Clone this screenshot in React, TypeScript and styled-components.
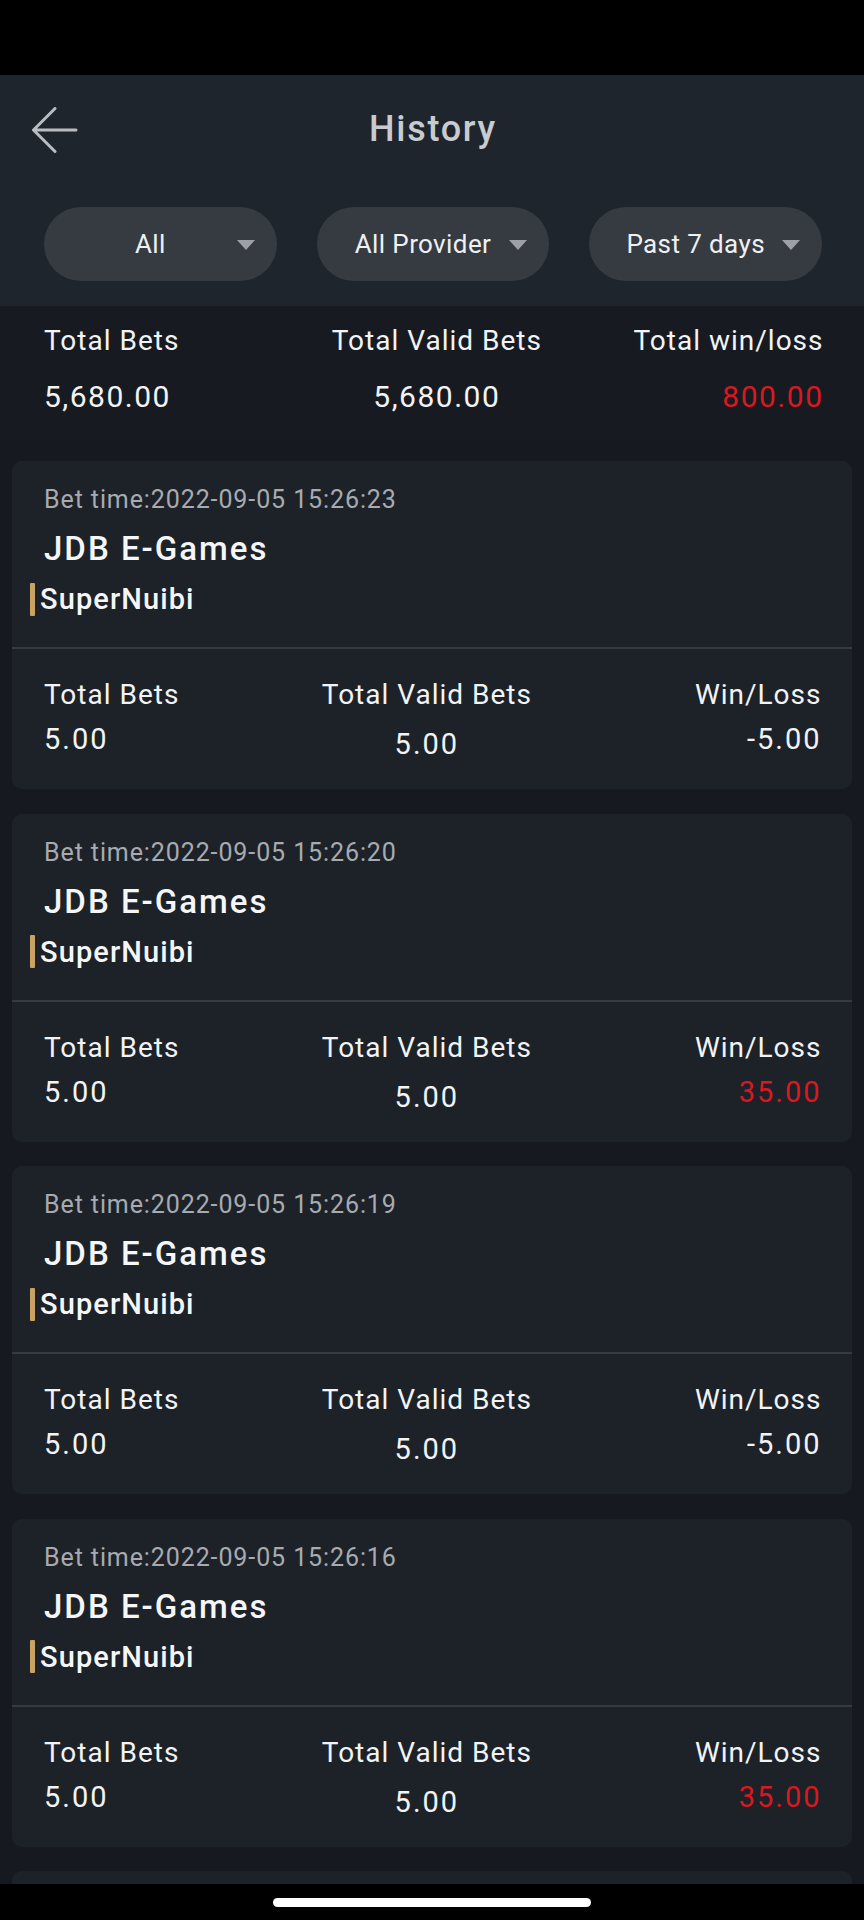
import React from 'react';
import styled, { createGlobalStyle } from 'styled-components';

const GlobalStyle = createGlobalStyle`
  html, body {
    margin: 0;
    padding: 0;
    background: #161a20;
  }
  * {
    box-sizing: border-box;
  }
  body {
    font-family: Roboto, "Noto Sans", sans-serif;
    color: #f2f3f5;
  }
`;

type Bet = {
  time: string;
  game: string;
  provider: string;
  total: string;
  valid: string;
  result: string;
};

const bets: Bet[] = [
  { time: '2022-09-05 15:26:23', game: 'JDB E-Games', provider: 'SuperNuibi', total: '5.00', valid: '5.00', result: '-5.00' },
  { time: '2022-09-05 15:26:20', game: 'JDB E-Games', provider: 'SuperNuibi', total: '5.00', valid: '5.00', result: '35.00' },
  { time: '2022-09-05 15:26:19', game: 'JDB E-Games', provider: 'SuperNuibi', total: '5.00', valid: '5.00', result: '-5.00' },
  { time: '2022-09-05 15:26:16', game: 'JDB E-Games', provider: 'SuperNuibi', total: '5.00', valid: '5.00', result: '35.00' },
  { time: '2022-09-05 15:26:12', game: 'JDB E-Games', provider: 'SuperNuibi', total: '5.00', valid: '5.00', result: '-5.00' },
];

const filters = ['All', 'All Provider', 'Past 7 days'];

function BackArrow() {
  return (
    <svg width="46" height="46" viewBox="0 0 46 46" fill="none">
      <path
        d="M44 23H2M23 1.5L1.5 23L23 44.5"
        stroke="#b9bdc2"
        strokeWidth="3"
        strokeLinecap="round"
        strokeLinejoin="round"
      />
    </svg>
  );
}

function App() {
  return (
    <Screen>
      <GlobalStyle />
      <StatusBar />
      <Header>
        <TitleRow>
          <BackButton>
            <BackArrow />
          </BackButton>
          <Title>History</Title>
        </TitleRow>
        <FilterRow>
          {filters.map((f) => (
            <Pill key={f}>
              <PillText>{f}</PillText>
              <Caret />
            </Pill>
          ))}
        </FilterRow>
      </Header>

      <Summary>
        <StatCol align="left">
          <Label>Total Bets</Label>
          <SummaryValue>5,680.00</SummaryValue>
        </StatCol>
        <StatCol align="center">
          <Label>Total Valid Bets</Label>
          <SummaryValue>5,680.00</SummaryValue>
        </StatCol>
        <StatCol align="right">
          <Label>Total win/loss</Label>
          <SummaryValue red>800.00</SummaryValue>
        </StatCol>
      </Summary>

      <CardList>
        {bets.map((b, i) => (
          <Card key={i}>
            <CardTop>
              <BetTime>Bet time:{b.time}</BetTime>
              <GameName>{b.game}</GameName>
              <Provider>
                <GoldBar />
                {b.provider}
              </Provider>
            </CardTop>
            <Divider />
            <CardBottom>
              <StatCol align="left">
                <Label>Total Bets</Label>
                <Value>{b.total}</Value>
              </StatCol>
              <StatCol align="center">
                <Label>Total Valid Bets</Label>
                <Value shifted>{b.valid}</Value>
              </StatCol>
              <StatCol align="right">
                <Label>Win/Loss</Label>
                <Value red={!b.result.startsWith('-')}>{b.result}</Value>
              </StatCol>
            </CardBottom>
          </Card>
        ))}
      </CardList>

      <NavBar>
        <HomeIndicator />
      </NavBar>
    </Screen>
  );
}

const Screen = styled.div`
  width: 864px;
  height: 100vh;
  overflow: hidden;
  background: #161a20;
`;

const StatusBar = styled.div`
  height: 75px;
  background: #000;
`;

const Header = styled.div`
  background: #1f252c;
  padding: 0 42px 25px 44px;
`;

const TitleRow = styled.div`
  height: 110px;
  display: flex;
  align-items: center;
  justify-content: center;
  position: relative;
`;

const BackButton = styled.div`
  position: absolute;
  left: -12px;
  top: 32px;
  width: 46px;
  height: 46px;
  display: flex;
`;

const Title = styled.div`
  font-size: 36px;
  font-weight: 500;
  color: #c8ccd0;
  letter-spacing: 1.7px;
  margin-top: -2px;
`;

const FilterRow = styled.div`
  margin-top: 22px;
  display: grid;
  grid-template-columns: repeat(3, 1fr);
  gap: 40px;
`;

const Pill = styled.div`
  height: 74px;
  border-radius: 37px;
  background: #363b42;
  display: flex;
  align-items: center;
  padding: 0 22px 0 28px;
  gap: 8px;
`;

const PillText = styled.div`
  flex: 1;
  text-align: center;
  font-size: 26px;
  letter-spacing: 0.4px;
  color: #eef0f2;
  white-space: nowrap;
`;

const Caret = styled.div`
  width: 0;
  height: 0;
  border-left: 9px solid transparent;
  border-right: 9px solid transparent;
  border-top: 10px solid #9da1a7;
  margin-top: 2px;
`;

const Summary = styled.div`
  display: grid;
  grid-template-columns: 1.03fr 1fr 1fr;
  padding: 18px 42px 24px 44px;
  background: #171b21;
`;

const StatCol = styled.div<{ align: 'left' | 'center' | 'right' }>`
  display: flex;
  flex-direction: column;
  align-items: ${(p) =>
    p.align === 'left' ? 'flex-start' : p.align === 'right' ? 'flex-end' : 'center'};
  margin-right: ${(p) => (p.align === 'right' ? '-1.5px' : '0')};
  white-space: nowrap;
`;

const Label = styled.div`
  font-size: 28px;
  line-height: 34px;
  letter-spacing: 1px;
  color: #f2f3f5;
`;

const SummaryValue = styled.div<{ red?: boolean }>`
  margin-top: 21px;
  font-size: 30px;
  line-height: 36px;
  letter-spacing: 1.5px;
  color: ${(p) => (p.red ? '#da1820' : '#f2f3f5')};
`;

const CardList = styled.div`
  display: flex;
  flex-direction: column;
  gap: 24.5px;
  padding: 22px 12px 0;
`;

const Card = styled.div`
  background: #1d2229;
  border-radius: 10px;
  flex-shrink: 0;
`;

const CardTop = styled.div`
  padding: 24px 32px 31px;
`;

const BetTime = styled.div`
  font-size: 25px;
  line-height: 30px;
  color: #a7abb0;
  letter-spacing: 0.9px;
`;

const GameName = styled.div`
  margin-top: 16px;
  font-size: 33px;
  line-height: 36px;
  font-weight: 500;
  letter-spacing: 2px;
  color: #f5f6f7;
`;

const Provider = styled.div`
  margin-top: 15px;
  margin-left: -14px;
  display: flex;
  align-items: center;
  gap: 5px;
  font-size: 29px;
  line-height: 34px;
  font-weight: 500;
  letter-spacing: 1.1px;
  color: #f5f6f7;
`;

const GoldBar = styled.span`
  width: 5px;
  height: 33px;
  background: #c9a264;
  border-radius: 1px;
`;

const Divider = styled.div`
  height: 2px;
  background: #353b43;
`;

const CardBottom = styled.div`
  display: grid;
  grid-template-columns: 1fr 1fr 1.04fr;
  padding: 29px 32px 28px;
`;

const Value = styled.div<{ red?: boolean; shifted?: boolean }>`
  margin-top: ${(p) => (p.shifted ? '15px' : '10px')};
  font-size: 29px;
  line-height: 34px;
  letter-spacing: 2px;
  color: ${(p) => (p.red ? '#da1820' : '#f2f3f5')};
`;

const NavBar = styled.div`
  position: fixed;
  left: 0;
  right: 0;
  bottom: 0;
  height: 36px;
  background: #000;
  display: flex;
  justify-content: center;
  align-items: flex-start;
  padding-top: 14px;
`;

const HomeIndicator = styled.div`
  width: 318px;
  height: 9px;
  border-radius: 5px;
  background: #fff;
`;

export default App;
